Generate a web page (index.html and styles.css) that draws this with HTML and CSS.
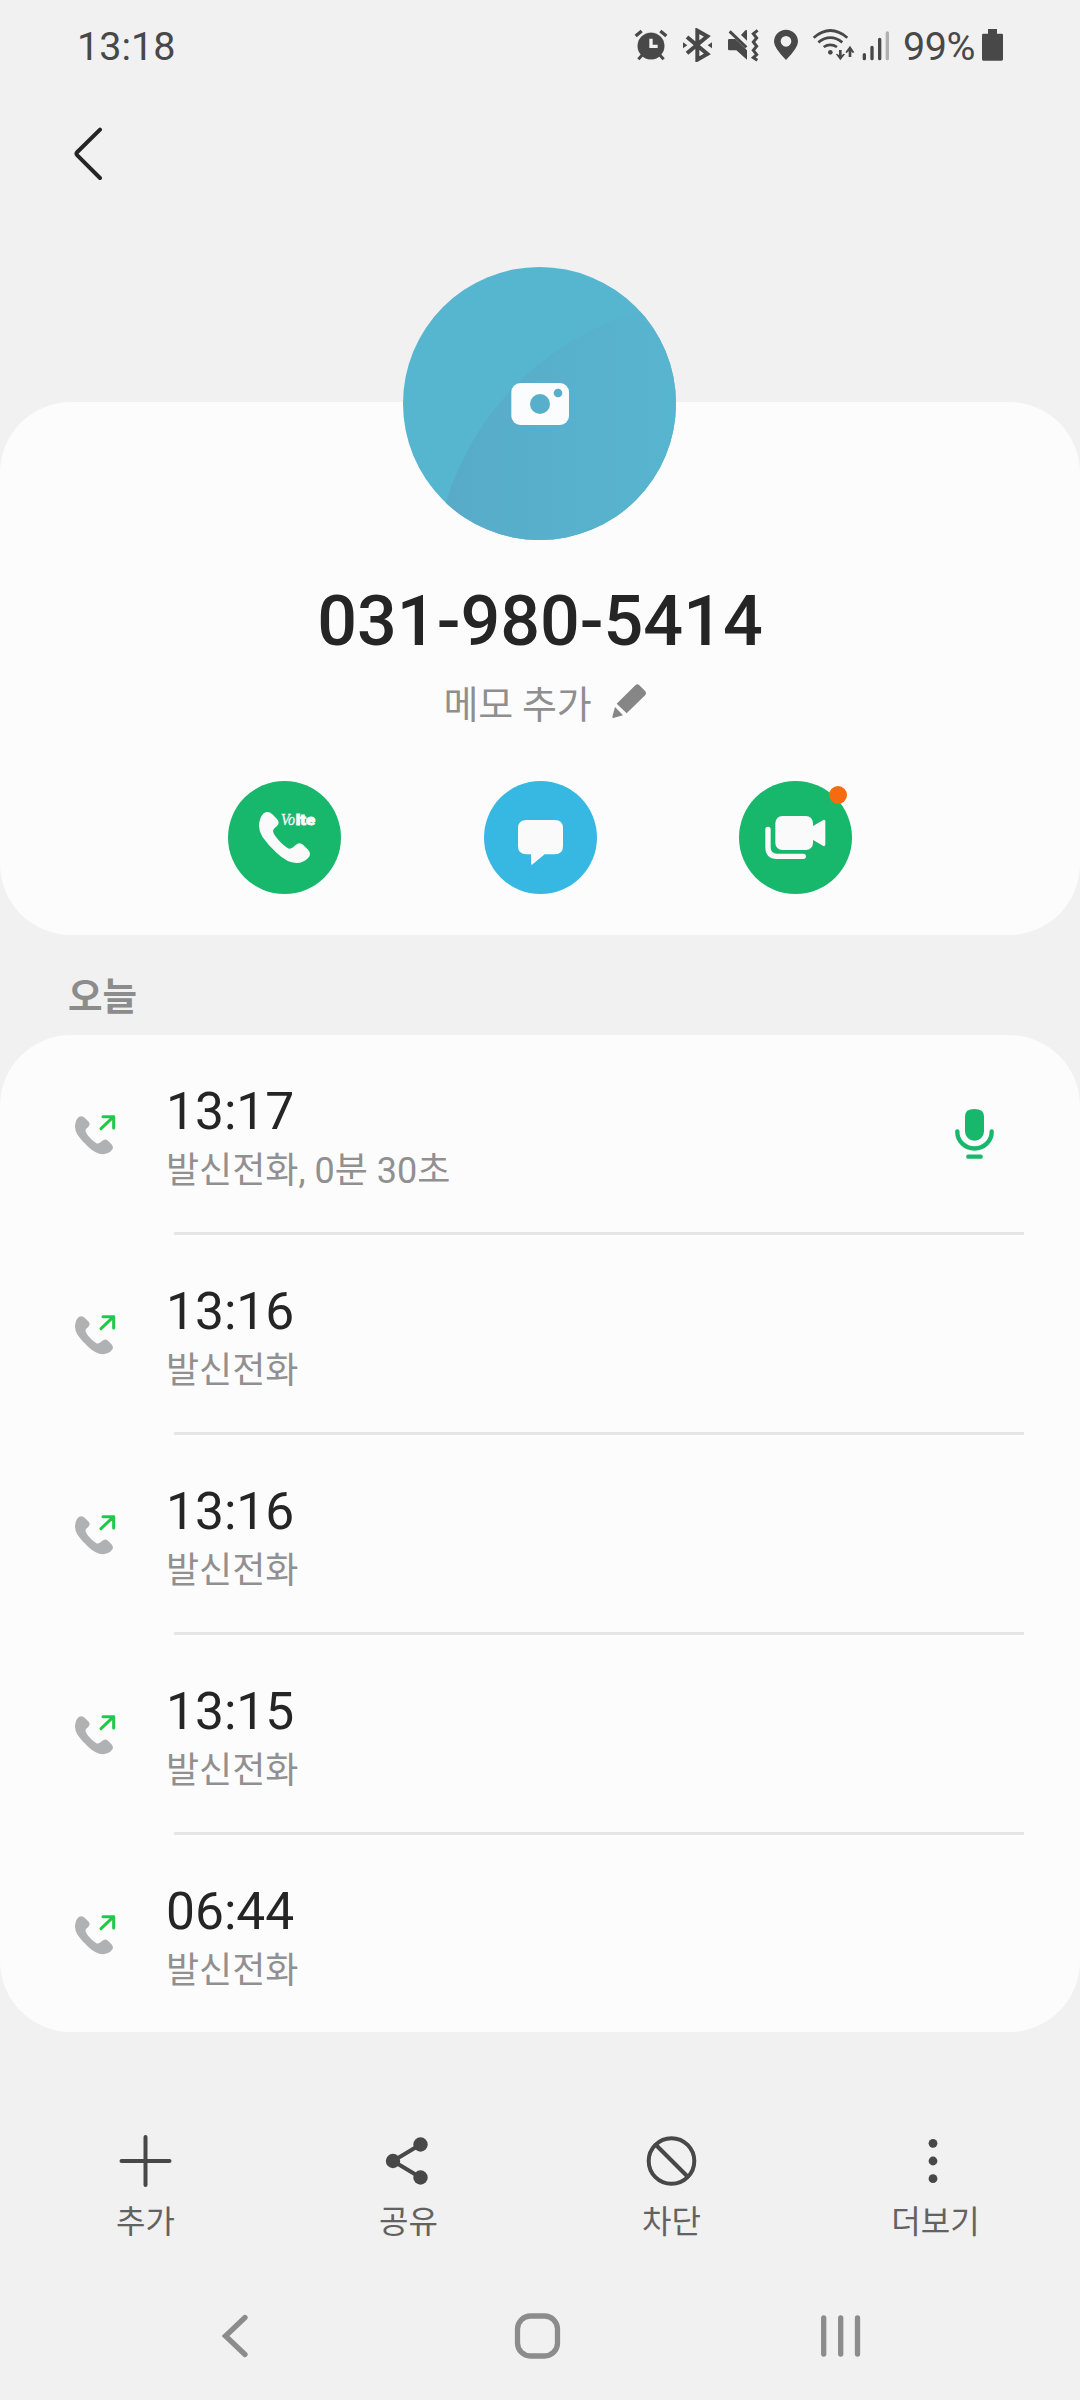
FILE: index.html
```html
<!DOCTYPE html>
<html lang="ko">
<head>
<meta charset="utf-8">
<title>031-980-5414</title>
<link rel="stylesheet" href="styles.css">
</head>
<body>
<svg class="defs" width="0" height="0" aria-hidden="true">
  <symbol id="handset" viewBox="177 154 156 156">
    <path d="M191 160Q204 150 217 163L231 177Q241 187 231 198Q219 207 219 214Q222 228 243 248Q262 266 270 266Q276 266 286 256Q298 244 309 254L325 270Q335 282 325 293Q312 308 289 309Q262 309 231 280Q205 256 187 230Q177 214 177 197Q178 173 191 160Z"/>
  </symbol>
  <symbol id="outgoing" viewBox="222 582 126 126">
    <use href="#handset" x="225" y="587" width="116" height="117" fill="#b0b1b3"/>
    <path d="M303 626L341 590M309 590H341V624" fill="none" stroke="#22c848" stroke-width="9" stroke-linecap="round" stroke-linejoin="round"/>
  </symbol>
</svg>

<header class="status">
  <time class="clock">13:18</time>
  <div class="indicators">
    <svg class="alarm" viewBox="102 84 102 102">
      <circle cx="153" cy="138" r="40"/>
      <path d="M107 108L125 93M199 108L181 93" stroke-width="10"/>
      <path d="M126 166L115 178M180 166L191 178" stroke-width="9"/>
      <path d="M153 116V139H173" stroke="#f1f1f1" stroke-width="10" fill="none"/>
    </svg>
    <svg class="bluetooth" viewBox="246 84 93 102">
      <path d="M261 111L322 162L292 179V92L322 109L261 160" fill="none" stroke-width="12"/>
      <path d="M249 127L262 136L249 145ZM336 127L323 136L336 145Z" stroke="none"/>
    </svg>
    <svg class="mute" viewBox="381 84 96 102">
      <path d="M388 117H406L441 151V179L409 151H388Q384 151 384 147V121Q384 117 388 117ZM423 105L436 91Q441 88 441 93V122Z" stroke="none"/>
      <path d="M389 94L439 142" stroke-width="9"/>
      <path d="M473 91L460 101L470 114L460 126L470 139L460 151L470 164L460 173L472 181" fill="none" stroke-width="9"/>
    </svg>
    <svg class="pin" viewBox="519 84 78 102">
      <path d="M558 180Q522 143 522 125A36 36 0 0 1 594 125Q594 143 558 180ZM558 108A16 16 0 1 0 558 140A16 16 0 1 0 558 108Z" fill-rule="evenodd" stroke="none"/>
    </svg>
    <svg class="wifi" viewBox="636 84 129 102">
      <path d="M641 113Q691 70 742 113M655 127Q691 99 727 127M671 141Q691 128 711 141" fill="none" stroke-width="8"/>
      <circle cx="691" cy="157" r="7" stroke="none"/>
      <path d="M721 150V172M750 146V171" stroke-width="8"/>
      <path d="M708 163L721 181L735 163L731 161L721 168L711 161ZM736 157L750 137L763 157L758 159L750 150L740 159Z" stroke="none"/>
    </svg>
    <svg class="signal" viewBox="786 84 84 102">
      <path d="M793 164V176M816 142V176M839 118V176" stroke-width="10" stroke-linecap="round"/>
      <path d="M862 99V176" stroke="#b0b0b0" stroke-width="10" stroke-linecap="round"/>
    </svg>
    <span class="percent">99%</span>
    <svg class="battery" viewBox="1146 84 63 102">
      <path d="M1164 87H1191V101H1205Q1209 101 1209 105V178Q1209 182 1205 182H1150Q1146 182 1146 178V105Q1146 101 1150 101H1164Z" stroke="none"/>
    </svg>
  </div>
</header>

<nav class="toolbar">
  <svg class="back" viewBox="219 381 90 162"><path d="M300 389L232 456Q227 461 232 466L300 534"/></svg>
</nav>

<main>
  <section class="card profile">
    <svg class="avatar" viewBox="69 51 819 819">
      <defs>
        <clipPath id="disc"><circle cx="478.500" cy="460.500" r="409.500"/></clipPath>
        <linearGradient id="shade" gradientUnits="userSpaceOnUse" x1="200" y1="0" x2="888" y2="0">
          <stop offset="0" stop-color="#57abc9"/>
          <stop offset="1" stop-color="#58b5cf"/>
        </linearGradient>
      </defs>
      <g clip-path="url(#disc)">
        <rect x="69" y="51" width="819" height="819" fill="#57b6cf"/>
        <circle cx="1018" cy="1008" r="858" fill="url(#shade)"/>
      </g>
      <rect x="394" y="399" width="173" height="126" rx="27" fill="#fafcfd"/>
      <circle cx="480" cy="462" r="30" fill="#58afcb"/>
      <circle cx="534" cy="429" r="13" fill="#58afcb"/>
    </svg>
    <h1 class="number">031-980-5414</h1>
    <div class="memo">
      <span>메모 추가</span>
      <svg class="pencil" viewBox="990 370 114 111">
        <path d="M1066 377Q1072 371 1078 377L1096 395Q1101 401 1096 406L1040 461L1010 432ZM1005 442L1029 467L1000 475Q996 475 997 471Z"/>
      </svg>
    </div>
    <div class="actions">
      <svg class="action" viewBox="84 63 339 339">
        <circle cx="253.500" cy="232.500" r="169.500" fill="#17b76c"/>
        <use href="#handset" x="177" y="154" width="156" height="156" fill="#fafafa"/>
        <text class="vo" x="243" y="195" textLength="42" lengthAdjust="spacingAndGlyphs">Vo</text>
        <text class="lte" x="287" y="195" textLength="58" lengthAdjust="spacingAndGlyphs">lte</text>
      </svg>
      <svg class="action" viewBox="852 63 339 339">
        <circle cx="1021.500" cy="232.500" r="169.500" fill="#37b8e3"/>
        <path d="M980 180H1064Q1089 180 1089 205V258Q1089 283 1064 283H1034L998 313Q993 316 993 311V283H980Q954 283 954 258V205Q954 180 980 180Z" fill="#fafafa"/>
      </svg>
      <div class="action video">
        <svg class="action" viewBox="117 63 339 339">
          <circle cx="286.500" cy="232.500" r="169.500" fill="#17b76c"/>
          <rect x="226" y="168" width="113" height="102" rx="21" fill="#fafafa"/>
          <path d="M339 198L370 180Q376 178 376 184V253Q376 260 370 258L339 240Z" fill="#fafafa"/>
          <path d="M204 208V262Q204 289 231 289H310" fill="none" stroke="#fafafa" stroke-width="16" stroke-linecap="round"/>
        </svg>
        <span class="badge"></span>
      </div>
    </div>
  </section>

  <h2 class="day">오늘</h2>

  <section class="card log">
    <article class="call">
      <svg class="direction"><use href="#outgoing"/></svg>
      <div class="entry"><time>13:17</time><p>발신전화, 0분 30초</p></div>
      <svg class="mic" viewBox="162 144 123 156">
        <path d="M195 169Q195 147 223 147Q252 147 252 169V214A28.500 28.500 0 0 1 195 214Z" fill="#17b76c"/>
        <path d="M172 214V216A51.500 49.500 0 0 0 275 216V214M205 290H242" fill="none" stroke="#17b76c" stroke-width="13" stroke-linecap="round"/>
      </svg>
    </article>
    <article class="call">
      <svg class="direction"><use href="#outgoing"/></svg>
      <div class="entry"><time>13:16</time><p>발신전화</p></div>
    </article>
    <article class="call">
      <svg class="direction"><use href="#outgoing"/></svg>
      <div class="entry"><time>13:16</time><p>발신전화</p></div>
    </article>
    <article class="call">
      <svg class="direction"><use href="#outgoing"/></svg>
      <div class="entry"><time>13:15</time><p>발신전화</p></div>
    </article>
    <article class="call">
      <svg class="direction"><use href="#outgoing"/></svg>
      <div class="entry"><time>06:44</time><p>발신전화</p></div>
    </article>
  </section>
</main>

<footer class="options">
  <div class="option">
    <svg viewBox="-29.500 -30 60 60"><path d="M-24 0H24M0 -24V24"/></svg>
    <span>추가</span>
  </div>
  <div class="option">
    <svg viewBox="-29.500 -30 60 60"><path d="M12 -16.500L-15.500 0L12 16.500"/><g class="solid"><circle cx="-15.500" cy="0" r="7.200"/><circle cx="12" cy="-16.500" r="7.200"/><circle cx="12" cy="16.500" r="7.200"/></g></svg>
    <span>공유</span>
  </div>
  <div class="option">
    <svg viewBox="-30 -30 60 60"><circle cx="-0.500" cy="0" r="22.800"/><path d="M-16 -16L15 15"/></svg>
    <span>차단</span>
  </div>
  <div class="option">
    <svg viewBox="-29.500 -30 60 60"><g class="solid"><circle cx="-1.500" cy="-17.700" r="4.400"/><circle cx="-1.500" cy="0" r="4.400"/><circle cx="-1.500" cy="17.700" r="4.400"/></g></svg>
    <span class="wide">더보기</span>
  </div>
</footer>

<nav class="system">
  <svg viewBox="-30 -30 60 60"><path d="M10 -18.500L-9.500 0L10 18.500"/></svg>
  <svg viewBox="-30 -30 60 60"><rect x="-20.500" y="-20" width="40" height="40" rx="13"/></svg>
  <svg viewBox="-30 -30 60 60"><path d="M-17.300 -18V18M-0.300 -18V18M16.500 -18V18"/></svg>
</nav>
</body>
</html>
```
FILE: styles.css
```css
* {
  box-sizing: border-box;
  margin: 0;
  padding: 0;
}

body {
  width: 1080px;
  height: 2400px;
  overflow: hidden;
  background: #f1f1f1;
  color: #252525;
  font-family: Roboto, "Noto Sans CJK KR", sans-serif;
}

svg {
  display: block;
  flex: none;
}

.defs {
  display: none;
}

/* Status bar */
.status {
  display: flex;
  justify-content: space-between;
  height: 90px;
  padding: 0 77px;
  color: #484848;
}

.clock {
  font-size: 39.5px;
  line-height: 94px;
}

.indicators {
  display: flex;
  align-items: center;
}

.indicators svg {
  height: 34px;
  fill: #484848;
  stroke: #484848;
}

.alarm {
  width: 34px;
}

.bluetooth {
  width: 31px;
  margin-left: 14px;
}

.mute {
  width: 32px;
  margin-left: 14px;
}

.pin {
  width: 26px;
  margin-left: 14px;
}

.wifi {
  width: 43px;
  margin-left: 13px;
}

.signal {
  width: 28px;
  margin-left: 7px;
}

.percent {
  width: 79px;
  margin-left: 13px;
  padding-top: 4px;
  font-size: 39.5px;
  line-height: 90px;
  letter-spacing: -0.5px;
  white-space: nowrap;
}

.battery {
  width: 21px;
}

.toolbar {
  height: 312px;
  padding: 37px 73px;
}

.back {
  width: 30px;
  height: 54px;
  fill: none;
  stroke: #252525;
  stroke-width: 12;
  stroke-linecap: round;
}

/* Cards */
.card {
  border-radius: 71px;
  background: #fcfcfc;
}

.profile {
  display: flex;
  flex-direction: column;
  align-items: center;
  height: 533px;
}

.avatar {
  width: 273px;
  height: 273px;
  margin-top: -135px;
  margin-right: 1px;
}

.number {
  margin-top: 41px;
  font-size: 70px;
  font-weight: 500;
  line-height: 80px;
}

.memo {
  display: flex;
  align-items: center;
  gap: 19px;
  height: 60px;
  margin-top: 10px;
  padding-left: 12px;
  color: #8f8f8f;
  font-size: 38px;
}

.memo span {
  letter-spacing: -0.3px;
}

.pencil {
  width: 38px;
  height: 37px;
}

.pencil path {
  fill: #868686;
}

.actions {
  display: flex;
  gap: 142.5px;
  margin-top: 50px;
}

.action {
  width: 113px;
  height: 113px;
}

.vo {
  fill: #fafafa;
  stroke: #fafafa;
  stroke-width: 1;
  font: italic 52px "Liberation Serif", serif;
}

.lte {
  fill: #fafafa;
  stroke: #fafafa;
  stroke-width: 2.5;
  font: 900 42px Roboto, sans-serif;
}

.video {
  position: relative;
}

.badge {
  position: absolute;
  top: 5px;
  right: 5px;
  width: 18px;
  height: 18px;
  border-radius: 50%;
  background: #f76b10;
}

.day {
  height: 100px;
  padding: 0 68px;
  color: #8c8c8c;
  font-size: 37.5px;
  font-weight: 700;
  line-height: 125px;
}

/* Call log */
.log {
  height: 997px;
}

.call {
  display: flex;
  height: 200px;
  padding: 0 85px 0 74px;
  background: linear-gradient(#e5e5e5, #e5e5e5) 174px 197px / 850px 3px no-repeat;
}

.call:last-child {
  background: none;
}

.direction {
  width: 42px;
  height: 42px;
  margin-top: 79px;
}

.entry {
  flex: 1;
  margin-left: 50px;
  padding-top: 47px;
}

.entry time {
  display: block;
  font-size: 51.5px;
  line-height: 60px;
}

.entry p {
  color: #909090;
  font-size: 36px;
  line-height: 58px;
}

.mic {
  width: 41px;
  height: 52px;
  margin-top: 73px;
}

/* Bottom actions */
.options {
  display: grid;
  grid-template-columns: repeat(4, 263px);
  height: 233px;
  padding: 99px 14px 0;
}

.option {
  display: flex;
  flex-direction: column;
  align-items: center;
  color: #626262;
  font-size: 32px;
  line-height: 62px;
}

.option .wide {
  padding-left: 2px;
}

.option svg {
  width: 60px;
  height: 60px;
  fill: none;
  stroke: #484848;
  stroke-width: 4;
  stroke-linecap: round;
}

.option .solid {
  fill: #484848;
  stroke: none;
}

.system {
  display: grid;
  grid-template-columns: repeat(3, 303px);
  justify-items: center;
  padding: 41px 0 0 83px;
}

.system svg {
  width: 60px;
  height: 60px;
  fill: none;
  stroke: #8c8c8c;
  stroke-width: 5.3;
  stroke-linecap: round;
}
```
